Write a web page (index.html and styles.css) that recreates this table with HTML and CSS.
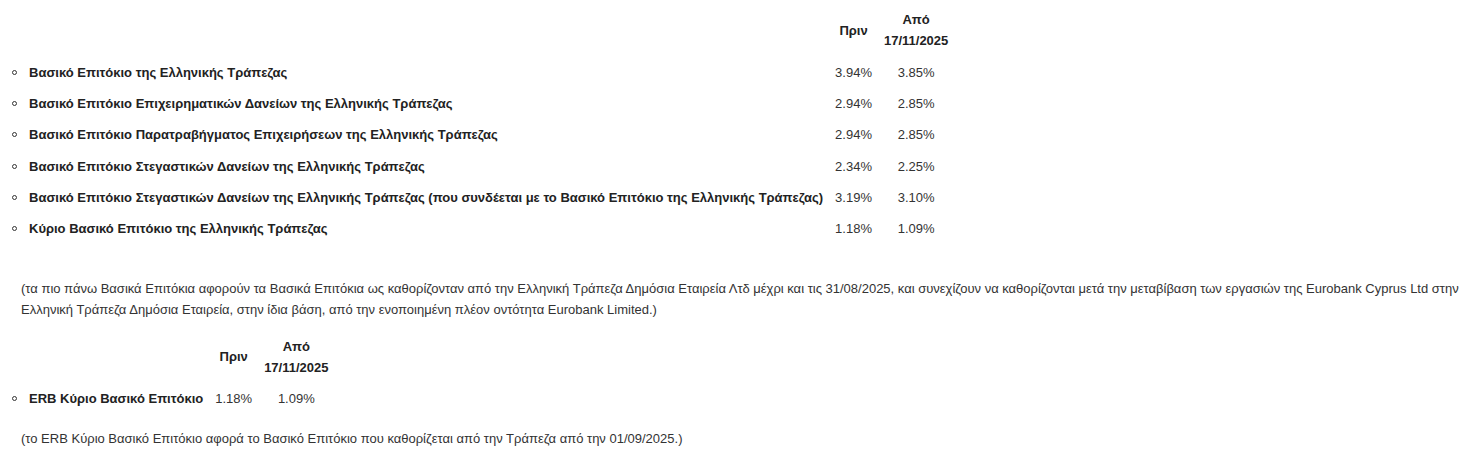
FILE: index.html
```html
<!DOCTYPE html>
<html lang="el">
<head>
<meta charset="utf-8">
<title>Βασικά Επιτόκια</title>
<link rel="stylesheet" href="styles.css">
</head>
<body>
<div class="page">
  <table class="rates">
    <thead>
      <tr>
        <th class="label-col"></th>
        <th>Πριν</th>
        <th>Από<br>17/11/2025</th>
      </tr>
    </thead>
    <tbody>
      <tr><td class="label"><span class="dot"></span>Βασικό Επιτόκιο της Ελληνικής Τράπεζας</td><td>3.94%</td><td>3.85%</td></tr>
      <tr><td class="label"><span class="dot"></span>Βασικό Επιτόκιο Επιχειρηματικών Δανείων της Ελληνικής Τράπεζας</td><td>2.94%</td><td>2.85%</td></tr>
      <tr><td class="label"><span class="dot"></span>Βασικό Επιτόκιο Παρατραβήγματος Επιχειρήσεων της Ελληνικής Τράπεζας</td><td>2.94%</td><td>2.85%</td></tr>
      <tr><td class="label"><span class="dot"></span>Βασικό Επιτόκιο Στεγαστικών Δανείων της Ελληνικής Τράπεζας</td><td>2.34%</td><td>2.25%</td></tr>
      <tr><td class="label"><span class="dot"></span>Βασικό Επιτόκιο Στεγαστικών Δανείων της Ελληνικής Τράπεζας (που συνδέεται με το Βασικό Επιτόκιο της Ελληνικής Τράπεζας)</td><td>3.19%</td><td>3.10%</td></tr>
      <tr><td class="label"><span class="dot"></span>Κύριο Βασικό Επιτόκιο της Ελληνικής Τράπεζας</td><td>1.18%</td><td>1.09%</td></tr>
    </tbody>
  </table>

  <p class="note note-first">(τα πιο πάνω Βασικά Επιτόκια αφορούν τα Βασικά Επιτόκια ως καθορίζονταν από την Ελληνική Τράπεζα Δημόσια Εταιρεία Λτδ μέχρι και τις 31/08/2025, και συνεχίζουν να καθορίζονται μετά την μεταβίβαση των εργασιών της Eurobank Cyprus Ltd στην Ελληνική Τράπεζα Δημόσια Εταιρεία, στην ίδια βάση, από την ενοποιημένη πλέον οντότητα Eurobank Limited.)</p>

  <table class="rates rates-second">
    <thead>
      <tr>
        <th class="label-col"></th>
        <th>Πριν</th>
        <th>Από<br>17/11/2025</th>
      </tr>
    </thead>
    <tbody>
      <tr><td class="label"><span class="dot"></span>ERB Κύριο Βασικό Επιτόκιο</td><td>1.18%</td><td>1.09%</td></tr>
    </tbody>
  </table>

  <p class="note note-second">(το ERB Κύριο Βασικό Επιτόκιο αφορά το Βασικό Επιτόκιο που καθορίζεται από την Τράπεζα από την 01/09/2025.)</p>
</div>
</body>
</html>
```

FILE: styles.css
```css
html, body {
  margin: 0;
  padding: 0;
  background: #ffffff;
}

body {
  font-family: "Liberation Sans", Arial, sans-serif;
  color: #333333;
}

.page {
  padding: 4px 8px 0 8px;
}

.rates {
  border-collapse: collapse;
  font-size: 13px;
  line-height: 21px;
}

.rates th,
.rates td {
  padding: 5.2px 6px;
  text-align: center;
  vertical-align: middle;
}

.rates th {
  font-weight: bold;
  color: #222222;
}

.rates td.label {
  text-align: left;
  font-weight: bold;
  color: #222222;
  padding-left: 4px;
  white-space: nowrap;
}

.dot {
  display: inline-block;
  width: 3px;
  height: 3px;
  border: 1px solid #333333;
  border-radius: 50%;
  margin-right: 12px;
  vertical-align: 2px;
}

.note {
  margin: 0;
  padding-left: 13px;
  font-size: 13px;
  line-height: 21px;
  color: #333333;
}

.note-first {
  margin-top: 33px;
}

.rates-second {
  margin-top: 11px;
}

.note-second {
  margin-top: 14px;
}
```
